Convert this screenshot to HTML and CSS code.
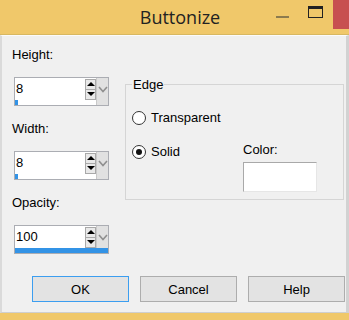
FILE: index.html
```html
<!DOCTYPE html>
<html lang="en">
<head>
  <meta charset="UTF-8">
  <title>Buttonize</title>
  <meta name="viewport" content="width=device-width, initial-scale=1.0">
  <link rel="stylesheet" href="styles.css">
</head>
<body>

  <div class="window">
    <header class="titlebar">
      <span class="title">Buttonize</span>
      <div class="controls">
        <span class="ctl-min"></span>
        <span class="ctl-max"></span>
        <span class="ctl-close"></span>
      </div>
    </header>

    <main class="dialog">
      <div class="main">
        <div class="fields">
          <label class="label">Height:</label>
          <div class="spin">
            <span class="value">8</span>
            <span class="arrows"><span class="up"></span><span class="down"></span></span>
            <span class="drop"><svg width="10" height="7" viewBox="0 0 10 7"><polyline points="1,1 5,5.5 9,1" fill="none" stroke="#8f8f8f" stroke-width="1.6"/></svg></span>
            <span class="bar"><span class="fill" style="width: 3px"></span></span>
          </div>

          <label class="label">Width:</label>
          <div class="spin">
            <span class="value">8</span>
            <span class="arrows"><span class="up"></span><span class="down"></span></span>
            <span class="drop"><svg width="10" height="7" viewBox="0 0 10 7"><polyline points="1,1 5,5.5 9,1" fill="none" stroke="#8f8f8f" stroke-width="1.6"/></svg></span>
            <span class="bar"><span class="fill" style="width: 3px"></span></span>
          </div>

          <label class="label">Opacity:</label>
          <div class="spin">
            <span class="value">100</span>
            <span class="arrows"><span class="up"></span><span class="down"></span></span>
            <span class="drop"><svg width="10" height="7" viewBox="0 0 10 7"><polyline points="1,1 5,5.5 9,1" fill="none" stroke="#8f8f8f" stroke-width="1.6"/></svg></span>
            <span class="bar"><span class="fill" style="width: 100%"></span></span>
          </div>
        </div>

        <fieldset class="edge">
          <legend>Edge</legend>
          <div class="radio first"><span class="dot"></span>Transparent</div>
          <div class="solid-row">
            <div class="radio solid"><span class="dot checked"></span>Solid</div>
            <div class="color">
              <div class="label">Color:</div>
              <div class="swatch"></div>
            </div>
          </div>
        </fieldset>
      </div>

      <div class="buttons">
        <button class="btn default">OK</button>
        <button class="btn">Cancel</button>
        <button class="btn">Help</button>
      </div>
    </main>

    <footer class="frame-bottom"></footer>
  </div>

</body>
</html>
```

FILE: styles.css
```css
:root {
  --frame: #f0c86a;
  --face: #f0f0f0;
  --edge: #abadb3;
  --blue: #3393e6;
  --font: 'Liberation Sans', Arial, sans-serif;
}

body {
  margin: 0;
  font-family: var(--font);
  font-size: 13px;
  color: #000;
}

.window {
  width: 349px;
  height: 320px;
  display: flex;
  flex-direction: column;
  overflow: hidden;
}

.titlebar {
  position: relative;
  height: 34px;
  background-color: var(--frame);
  border-bottom: 1px solid #d8b862;
  text-align: center;
  padding-left: 11px;
}

.title {
  font-family: 'Open Sans', sans-serif;
  font-size: 18px;
  line-height: 34px;
  color: #222;
}

.controls {
  position: absolute;
  top: 0;
  right: 0;
  display: flex;
  align-items: flex-start;
}

.ctl-min {
  width: 13px;
  height: 2px;
  margin-top: 16px;
  background-color: #8c7b4e;
}

.ctl-max {
  width: 13px;
  height: 8px;
  margin: 6px 10px 0 19px;
  border: 1px solid #222;
  border-top-width: 3px;
}

.ctl-close {
  width: 16px;
  height: 29px;
  background-color: #c75050;
}

.dialog {
  background-color: var(--face);
  border-top: 1px solid #fbfbfb;
  border-left: 2px solid #dadada;
  border-right: 3px solid #d2d2d2;
  border-bottom: 1px solid #cfcfcf;
  padding: 11px 2px 10px 10px;
}

.main {
  display: flex;
  align-items: flex-start;
}

.fields {
  width: 97px;
}

.label {
  display: block;
  line-height: 15px;
}

.fields .label {
  margin-bottom: 15px;
}

.spin {
  display: grid;
  grid-template-columns: 1fr 11px 12px;
  grid-template-rows: 22px 5px;
  width: 93px;
  height: 27px;
  margin-left: 2px;
  margin-bottom: 15px;
  border: 1px solid var(--edge);
  background-color: #fff;
}

.spin:last-child {
  margin-bottom: 0;
}

.value {
  grid-row: 1;
  grid-column: 1;
  padding-left: 1px;
  line-height: 22px;
}

.arrows {
  grid-row: 1;
  grid-column: 2;
  display: flex;
  flex-direction: column;
  padding-top: 1px;
}

.arrows span {
  height: 9px;
  border: 1px solid #a9a9a9;
  background-color: #e9e9e9;
  display: flex;
  align-items: center;
  justify-content: center;
}

.arrows span + span {
  margin-top: 0;
  border-top: none;
  height: 10px;
}

.up::after,
.down::after {
  content: '';
  border-left: 4px solid transparent;
  border-right: 4px solid transparent;
}

.up::after {
  border-bottom: 4px solid #000;
}

.down::after {
  border-top: 4px solid #000;
}

.drop {
  grid-row: 1 / 3;
  grid-column: 3;
  background-color: #e1e1e1;
  border-left: 1px solid #c9c9c9;
  display: flex;
  justify-content: center;
  padding-top: 8px;
}

.bar {
  grid-row: 2;
  grid-column: 1 / 4;
  display: flex;
}

.fill {
  background-color: var(--blue);
}

.edge {
  flex: 1;
  margin: 30px 0 0 16px;
  padding: 0 6px 7px 6px;
  border: 1px solid #d5d5d5;
  min-width: 0;
}

.edge legend {
  padding: 0 1px;
  line-height: 15px;
}

.radio {
  display: flex;
  align-items: center;
  gap: 5px;
  line-height: 15px;
}

.radio.first {
  margin-top: 18px;
}

.dot {
  width: 12px;
  height: 12px;
  border: 1px solid #333;
  border-radius: 50%;
  background-color: #fff;
  display: flex;
  align-items: center;
  justify-content: center;
}

.dot.checked::after {
  content: '';
  width: 6px;
  height: 6px;
  border-radius: 50%;
  background-color: #111;
}

.solid-row {
  display: grid;
  grid-template-columns: 111px 74px;
  margin-top: 17px;
}

.radio.solid {
  margin-top: 2px;
  align-self: start;
}

.swatch {
  height: 28px;
  margin-top: 5px;
  background-color: #fff;
  border: 1px solid;
  border-color: #a9a9a9 #e6e6e6 #e6e6e6 #a9a9a9;
}

.buttons {
  display: flex;
  justify-content: flex-end;
  gap: 11px;
  margin: 22px -1px 0 0;
}

.btn {
  width: 97px;
  height: 26px;
  font-family: var(--font);
  font-size: 13px;
  color: #000;
  background-color: #e3e3e3;
  border: 1px solid #adadad;
  padding: 0;
}

.btn.default {
  border-color: #3c9ef0;
}

.frame-bottom {
  flex: 1;
  background-color: var(--frame);
}
```
